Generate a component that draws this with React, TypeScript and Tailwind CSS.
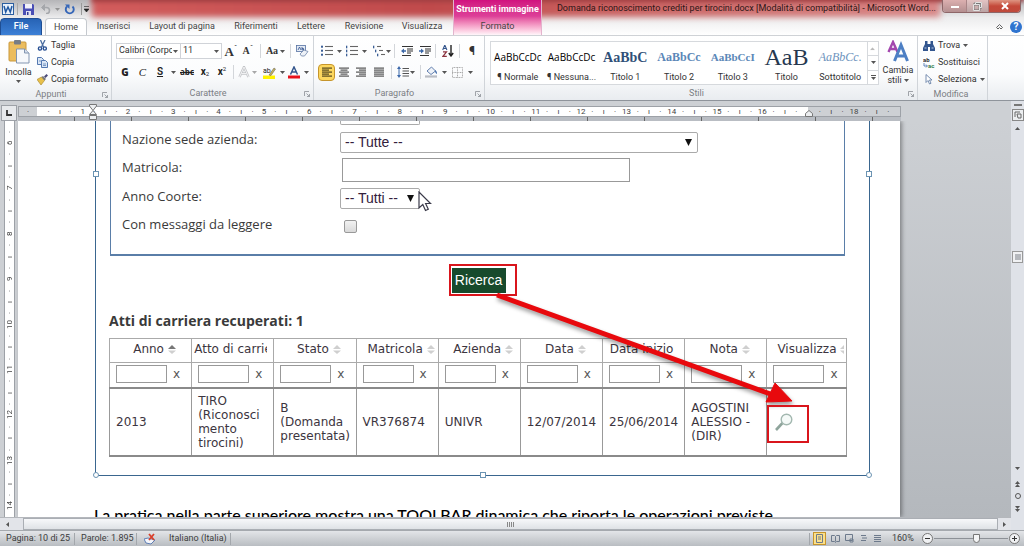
import type { ReactNode } from "react";

const TABS = [
  { label: "Inserisci", cls: "w-[45px]" },
  { label: "Layout di pagina", cls: "w-[88px]" },
  { label: "Riferimenti", cls: "w-[56px]" },
  { label: "Lettere", cls: "w-[50px]" },
  { label: "Revisione", cls: "w-[52px]" },
  { label: "Visualizza", cls: "w-[60px]" },
];

const STYLES = [
  { label: "¶ Normale", sample: "AaBbCcDc", cls: "font-[Open_Sans,sans-serif] text-[10px] text-black" },
  { label: "¶ Nessuna...", sample: "AaBbCcDc", cls: "font-[Open_Sans,sans-serif] text-[10px] text-black" },
  { label: "Titolo 1", sample: "AaBbC", cls: "font-[Liberation_Serif,serif] text-[14px] font-bold text-[#2f5078]" },
  { label: "Titolo 2", sample: "AaBbCc", cls: "font-[Liberation_Serif,serif] text-[12px] font-bold text-[#5b87b8]" },
  { label: "Titolo 3", sample: "AaBbCcI", cls: "font-[Liberation_Serif,serif] text-[11px] font-bold text-[#5b87b8]" },
  { label: "Titolo", sample: "AaB", cls: "font-[Liberation_Serif,serif] text-[24px] text-[#26384f]" },
  { label: "Sottotitolo", sample: "AaBbCc.", cls: "font-[Liberation_Serif,serif] text-[12px] italic text-[#6d93bd]" },
];

const COLUMNS = [
  { label: "Anno", sort: "up", value: "2013" },
  { label: "Atto di carriera", sort: "none", value: "TIRO\n(Riconosci\nmento\ntirocini)" },
  { label: "Stato", sort: "both", value: "B\n(Domanda\npresentata)" },
  { label: "Matricola", sort: "both", value: "VR376874" },
  { label: "Azienda", sort: "both", value: "UNIVR" },
  { label: "Data", sort: "both", value: "12/07/2014" },
  { label: "Data inizio", sort: "none", value: "25/06/2014" },
  { label: "Nota", sort: "both", value: "AGOSTINI\nALESSIO -\n(DIR)" },
  { label: "Visualizza", sort: "both", value: "" },
];

const rulerMark = (i: number, first: number) => {
  const k = i % 4;
  if (k === 3) return String(first + (i - 3) / 4);
  return k === 1 ? "ı" : "·";
};

const Caret = () => (
  <svg className="h-[3px] w-[5px] shrink-0" viewBox="0 0 5 3">
    <path d="M0 0h5L2.5 3z" fill="#555" />
  </svg>
);

const Sep = () => <span className="h-3.5 w-px shrink-0 bg-[#d3d6da]" />;

const Tool = ({ w, label, children }: { w: string; label: string; children: ReactNode }) => (
  <button aria-label={label} className={`flex h-4 shrink-0 items-center justify-center leading-none ${w}`}>
    {children}
  </button>
);

const Lines = ({ rows, color = "#555" }: { rows: number[][]; color?: string }) => (
  <svg className="h-[11px] w-[12px]" viewBox="0 0 12 11">
    {rows.map(([x, w], i) => (
      <rect key={i} x={x} y={i * 2 + 0.5} width={w} height="1.2" fill={color} />
    ))}
  </svg>
);

const ListIcon = ({ kind }: { kind: "bullet" | "number" | "multi" }) => (
  <svg className="h-3 w-3" viewBox="0 0 12 12">
    {[1.5, 5.5, 9.5].map((y, i) => {
      const dx = kind === "multi" ? i * 2 : 0;
      return (
        <g key={y}>
          <rect x={dx} y={y - 0.8} width={kind === "bullet" ? 2 : 1.3} height={kind === "bullet" ? 2 : 2.6} fill="#3b5f96" />
          <path d={`M${dx + 4} ${y}H${kind === "multi" ? dx + 8 : 12}`} stroke="#666" strokeWidth="1.1" />
        </g>
      );
    })}
  </svg>
);

const IndentIcon = ({ out }: { out?: boolean }) => (
  <svg className="h-3 w-[13px]" viewBox="0 0 13 12">
    <path d="M1 1.5h11M6 4h6M6 6h6M6 8h4M1 10.5h9" stroke="#333" strokeWidth="1.2" />
    <path d={out ? "M0 6l3-2.4v1.6h2v1.6H3v1.6z" : "M5 6L2 3.6v1.6H0v1.6h2v1.6z"} fill="#3c68a8" />
  </svg>
);

const Group = ({ label, cls, launcher = true, children }: { label: string; cls: string; launcher?: boolean; children: ReactNode }) => (
  <section className={`flex flex-col border-r border-[#d0d4d9] ${cls}`}>
    <div className="flex flex-1">{children}</div>
    <div className="flex h-[13px] items-center pr-[3px] text-[#7b7e83]">
      <span className="flex-1 text-center">{label}</span>
      {launcher && (
        <svg className="h-[6px] w-[6px]" viewBox="0 0 6 6" fill="none" stroke="#8b8f95">
          <path d="M.5 5V.5H5M2.5 2.5l3 3M5.5 3v2.5H3" strokeWidth=".8" />
        </svg>
      )}
    </div>
  </section>
);

const TitleBar = () => (
  <div className="flex h-[18px] items-center">
    <div className="flex w-[90px] items-center pl-0.5">
      <svg className="h-3 w-3" viewBox="0 0 12 12">
        <rect x=".5" y=".5" width="11" height="11" fill="#e9f1fa" stroke="#2b5ea0" />
        <path d="M2 3l1.700 6L6 4l2.300 5L10 3" fill="none" stroke="#1f57a2" strokeWidth="1.500" />
      </svg>
      <span className="mx-[3px] h-3 w-px bg-[#aaa]" />
      <svg className="ml-[2px] h-[11px] w-[11px]" viewBox="0 0 11 11">
        <path d="M0 0h10l1 1v10H0z" fill="#4a4fb5" />
        <path d="M2 0h7v4.500H2z" fill="#f1f1fa" />
        <path d="M3 7h5v4H3z" fill="#dfe1f3" />
        <path d="M4 8h1.500v3H4z" fill="#333a94" />
      </svg>
      <svg className="ml-[7px] h-[10px] w-[10px]" viewBox="0 0 10 10" fill="none" stroke="#a5a7ab">
        <path d="M2 3.500h3.500a3 3 0 010 6H5" strokeWidth="1.600" />
        <path d="M3.500 .5L.5 3.500l3 3z" fill="#a5a7ab" />
      </svg>
      <span className="ml-1 opacity-50"><Caret /></span>
      <svg className="ml-[4px] h-[11px] w-[11px]" viewBox="0 0 11 11" fill="none">
        <path d="M8.500 2.500a4 4 0 11-5.500 0" stroke="#3566b8" strokeWidth="1.900" />
        <path d="M1 .5h4.500V5z" fill="#3566b8" />
      </svg>
      <span className="mr-[2px] ml-[6px] h-3 w-px bg-[#999]" />
      <svg className="h-[6px] w-[5px] shrink-0" viewBox="0 0 5 6"><path d="M0 .5h5M0 3h5L2.500 6z" fill="#222" stroke="#222" strokeWidth=".6" /></svg>
    </div>
    <h1 className="flex-1 truncate pr-[6px] text-right text-[9px] text-[#2c1516]">
      Domanda riconoscimento crediti per tirocini.docx [Modalità di compatibilità] - Microsoft Word...
    </h1>
    <div className="mr-[3px] flex h-[13px] self-start overflow-hidden rounded-b border border-t-0 border-[#8d6668]">
      <button aria-label="Riduci a icona" className="flex w-6 items-end justify-center border-r border-[#a98587] bg-linear-to-b from-[#dcb0b0] to-[#b48f90] pb-1">
        <span className="h-0.5 w-2 bg-white" />
      </button>
      <button aria-label="Ripristina" className="flex w-[22px] items-center justify-center border-r border-[#a98587] bg-linear-to-b from-[#e3c3c3] to-[#bba3a4]">
        <svg className="h-[9px] w-[9px]" viewBox="0 0 9 9" fill="none"><path d="M2.500 2V.5h6v5H7M.5 2.500h6v6h-6z" stroke="#777" strokeWidth="1.800" /><path d="M2.500 2V.5h6v5H7M.5 2.500h6v6h-6z" stroke="#fff" strokeWidth=".8" /></svg>
      </button>
      <button aria-label="Chiudi" className="flex w-[31px] items-center justify-center bg-linear-to-b from-[#dd9482] via-[#c4493a] to-[#bf4a3c]">
        <svg className="h-2 w-2" viewBox="0 0 8 8"><path d="M1 1l6 6M7 1L1 7" stroke="#fff" strokeWidth="2" /></svg>
      </button>
    </div>
  </div>
);

const Header = () => (
  <header className="relative h-9 shrink-0 overflow-hidden border-b border-[#cfd2d6] bg-linear-to-b from-[#b5b5b8] via-[#ececed] via-50% to-white">
    <div className="absolute -top-1 right-[84px] left-[92px] h-[21px] bg-linear-to-r from-[#d25c5c] via-[#c04a4b] via-40% to-[#d98787] blur-[3px]" />
    <div className="absolute -top-1 right-0 left-[92px] h-[6px] bg-[#a03c3f] blur-[2px]" />
    {/* Contextual tab */}
    <div className="absolute top-0 left-[453px] flex h-9 w-[89px] flex-col items-center border-x border-[#e3b4cd] bg-linear-to-b from-[#d1107f] via-[#dd3f98] via-45% to-white">
      <span className="flex h-[18px] items-center pt-0.5 font-bold whitespace-nowrap text-white">Strumenti immagine</span>
      <button className="flex h-[18px] items-center text-[#444]">Formato</button>
    </div>
    <div className="relative">
      <TitleBar />
      <nav className="flex h-[18px] items-center text-[#454545]">
        <button className="h-[18px] w-[42px] rounded-t-sm border border-[#1e4e94] bg-linear-to-b from-[#2763b5] to-[#3c80d6] font-semibold text-white">File</button>
        <button className="mr-1 ml-[3px] h-[18px] w-[42px] rounded-t-sm border border-b-0 border-[#c5c9ce] bg-white">Home</button>
        {TABS.map(({ label, cls }) => (
          <button key={label} className={`mr-[2px] text-center whitespace-nowrap ${cls}`}>{label}</button>
        ))}
        <span className="flex-1" />
        <button aria-label="Riduci barra multifunzione" className="mr-[7px]">
          <svg className="h-[6px] w-[7px]" viewBox="0 0 7 6" fill="none" stroke="#555"><path d="M.5 3.500l3-3 3 3-1.500 1.500L3.500 3.500 2 5z" strokeWidth=".9" /></svg>
        </button>
        <button aria-label="Guida" className="mr-[2px] h-3 w-3 rounded-full bg-[#2f74cf] text-[10px] leading-3 font-bold text-white">?</button>
      </nav>
    </div>
  </header>
);

const Clipboard = () => (
  <Group label="Appunti" cls="w-[112px]">
    <button className="flex w-[36px] shrink-0 flex-col items-center pt-1 pl-px">
      <svg className="h-6 w-[22px]" viewBox="0 0 22 24">
        <rect x="1" y="2" width="17" height="19" rx="1" fill="#ecbd5e" stroke="#c9983b" />
        <rect x="6" y="0" width="7" height="4.500" rx="1" fill="#777d86" />
        <path d="M8.500 9h8l4.500 4v10H8.500z" fill="#f6f8fb" stroke="#8295b0" />
        <path d="M16.500 9v4H21" fill="#d4deec" stroke="#8295b0" />
      </svg>
      <span className="mt-[2px] leading-3">Incolla</span>
      <span className="mt-[2px]"><Caret /></span>
    </button>
    <div className="flex flex-col pt-[1px] pl-px">
      <button className="flex h-[17px] items-center gap-[3px] whitespace-nowrap">
        <svg className="h-[11px] w-[11px]" viewBox="0 0 11 11" fill="none">
          <path d="M3.500 0l3 7M8 0L4.500 7" stroke="#4c6ea0" strokeWidth="1.300" />
          <circle cx="3" cy="8.500" r="1.600" stroke="#274f93" strokeWidth="1.400" />
          <circle cx="7.800" cy="8.500" r="1.600" stroke="#274f93" strokeWidth="1.400" />
        </svg>
        Taglia
      </button>
      <button className="flex h-[17px] items-center gap-[3px] whitespace-nowrap">
        <svg className="h-[11px] w-[11px]" viewBox="0 0 11 11">
          <path d="M.5.5h4l2 2v5h-6z" fill="#dbe7f6" stroke="#5478b0" />
          <path d="M4.500 3.500h4l2 2v5h-6z" fill="#dbe7f6" stroke="#5478b0" />
          <path d="M6 7h3M6 8.500h3M2 4h2" stroke="#5478b0" strokeWidth=".7" />
        </svg>
        Copia
      </button>
      <button className="flex h-[17px] items-center gap-[3px] whitespace-nowrap">
        <svg className="h-[11px] w-[11px]" viewBox="0 0 11 11">
          <path d="M0 5.500L4.500 3l3 3.500L4 11z" fill="#e8c04a" stroke="#a58327" strokeWidth=".6" />
          <path d="M4.500 3l1.500-1 3 3-1.500 1.500z" fill="#777" />
          <path d="M7 2.500L9.500 0 11 1.500 8.500 4z" fill="#4a4a78" />
        </svg>
        Copia formato
      </button>
    </div>
  </Group>
);

const FontGroup = () => (
  <Group label="Carattere" cls="w-[202px]">
    <div className="flex flex-col gap-[5px] pt-[7px] pl-1">
      <div className="flex h-4 items-center">
        <div className="relative flex items-center">
          <select aria-label="Tipo di carattere" className="h-4 w-[65px] appearance-none overflow-hidden border border-[#d0d3d8] bg-white pr-[8px] pl-[2px] text-[9px]">
            <option>Calibri (Corpc</option>
          </select>
          <span className="pointer-events-none absolute right-[3px]"><Caret /></span>
        </div>
        <div className="relative flex items-center">
          <select aria-label="Dimensione carattere" className="h-4 w-[41px] appearance-none border border-l-0 border-[#d0d3d8] bg-white pl-[2px] text-[9px]">
            <option>11</option>
          </select>
          <span className="pointer-events-none absolute right-[3px]"><Caret /></span>
        </div>
        <Tool w="w-[18px]" label="Aumenta dimensione">
          <span className="font-[Liberation_Serif,serif] text-[13px] font-bold">A</span><span className="mb-1 text-[8px]">ˆ</span>
        </Tool>
        <Tool w="w-[16px]" label="Riduci dimensione">
          <span className="font-[Liberation_Serif,serif] text-[10px] font-bold">A</span><span className="mb-1 text-[8px]">ˇ</span>
        </Tool>
        <span className="w-1" />
        <Sep />
        <Tool w="w-[29px]" label="Maiuscole/minuscole">
          <span className="mr-0.5 font-[Liberation_Serif,serif] text-[10px] font-bold">Aa</span><Caret />
        </Tool>
        <Sep />
        <Tool w="w-[22px]" label="Cancella formattazione">
          <svg className="h-3 w-[13px]" viewBox="0 0 13 12">
            <rect x=".5" y=".5" width="9" height="6" fill="#e4ebf5" stroke="#5572a2" strokeWidth=".8" />
            <path d="M2 5l1.500-3L5 5M6 2v3h1.500V3.500H6" fill="none" stroke="#2f4f8c" strokeWidth=".8" />
            <path d="M4 9l4-4 4 1.500-3.500 4.500H5.500z" fill="#edf1f7" stroke="#7085aa" strokeWidth=".8" />
          </svg>
        </Tool>
      </div>
      <div className="flex h-4 items-center text-[#222]">
        <Tool w="w-[18px]" label="Grassetto"><b className="font-[Open_Sans,sans-serif] text-[10px] font-extrabold">G</b></Tool>
        <Tool w="w-[17px]" label="Corsivo"><i className="font-[Liberation_Serif,serif] text-[11px]">C</i></Tool>
        <Tool w="w-[18px]" label="Sottolineato"><span className="text-[10px] font-semibold underline">S</span></Tool>
        <Tool w="w-[8px]" label="Stile sottolineatura"><Caret /></Tool>
        <Tool w="w-[20px]" label="Barrato"><span className="font-[Open_Sans,sans-serif] text-[8px] font-bold line-through">abc</span></Tool>
        <Tool w="w-[16px]" label="Pedice"><b className="text-[10px]">x</b><sub className="text-[6px]">2</sub></Tool>
        <Tool w="w-[18px]" label="Apice"><b className="text-[10px]">x</b><sup className="text-[6px]">2</sup></Tool>
        <span className="w-[2px]" />
        <Sep />
        <Tool w="w-[27px]" label="Effetti testo">
          <svg className="mr-[2px] h-3 w-3" viewBox="0 0 12 12"><path d="M1.500 11L6 1l4.500 10M3.500 7.500h5" fill="none" stroke="#c3c5c8" strokeWidth="2.400" /><path d="M1.500 11L6 1l4.500 10M3.500 7.500h5" fill="none" stroke="#f5f5f6" strokeWidth=".9" /></svg>
          <span className="opacity-50"><Caret /></span>
        </Tool>
        <Tool w="w-[25px]" label="Colore evidenziatore">
          <svg className="mr-1 h-[13px] w-[13px]" viewBox="0 0 13 13">
            <rect y="9.500" width="12" height="3.500" fill="#fff200" />
            <text x="0" y="7" fontSize="7" fill="#222">ab</text>
            <path d="M6 9l5-7 1.500 1L8 9.500z" fill="#c9b45c" stroke="#555" strokeWidth=".5" />
          </svg>
          <Caret />
        </Tool>
        <Tool w="w-[24px]" label="Colore carattere">
          <svg className="mr-1 h-[13px] w-3" viewBox="0 0 12 13">
            <rect y="9.500" width="12" height="3" fill="#e8121b" />
            <path d="M2.500 8.500L6 1l3.500 7.500M4 6h4" fill="none" stroke="#34558c" strokeWidth="1.500" />
          </svg>
          <Caret />
        </Tool>
      </div>
    </div>
  </Group>
);

const ParagraphGroup = () => (
  <Group label="Paragrafo" cls="w-[171px]">
    <div className="flex flex-col gap-[5px] pt-[7px] pl-1">
      <div className="flex h-4 items-center">
        <Tool w="w-[26px]" label="Elenco puntato"><ListIcon kind="bullet" /><span className="w-1" /><Caret /></Tool>
        <Tool w="w-[25px]" label="Elenco numerato"><ListIcon kind="number" /><span className="w-1" /><Caret /></Tool>
        <Tool w="w-[25px]" label="Elenco a più livelli"><ListIcon kind="multi" /><span className="w-px" /><Caret /></Tool>
        <Sep />
        <span className="w-1" />
        <Tool w="w-[17px]" label="Riduci rientro"><IndentIcon out /></Tool>
        <Tool w="w-[18px]" label="Aumenta rientro"><IndentIcon /></Tool>
        <span className="w-px" />
        <Sep />
        <Tool w="w-[23px]" label="Ordina">
          <svg className="h-3 w-3" viewBox="0 0 12 12" fill="none">
            <path d="M.7 5L2.800 0l2.100 5M1.500 3.500h2.600" stroke="#34558c" strokeWidth="1.100" />
            <path d="M1 6.800h3.500L1 11.300h3.800" stroke="#8c3440" strokeWidth="1.200" />
            <path d="M9 0v11M6.800 8L9 11l2.200-3" stroke="#222" strokeWidth="1.400" />
          </svg>
        </Tool>
        <Sep />
        <Tool w="w-[24px]" label="Mostra tutto"><span className="text-[12px] font-bold text-[#333]">¶</span></Tool>
      </div>
      <div className="flex h-4 items-center">
        <button aria-label="Allinea a sinistra" className="flex h-[17px] w-[17px] items-center justify-center rounded-sm border border-[#c6952c] bg-[#fcd75f]">
          <Lines rows={[[1, 10], [1, 7], [1, 10], [1, 7], [1, 10]]} color="#54481f" />
        </button>
        <Tool w="w-[17px]" label="Centra"><Lines rows={[[1, 10], [2.5, 7], [1, 10], [2.5, 7], [1, 10]]} /></Tool>
        <Tool w="w-[18px]" label="Allinea a destra"><Lines rows={[[1, 10], [4, 7], [1, 10], [4, 7], [1, 10]]} /></Tool>
        <Tool w="w-[18px]" label="Giustifica"><Lines rows={[[1, 10], [1, 10], [1, 10], [1, 10], [1, 10]]} /></Tool>
        <span className="w-[3px]" />
        <Sep />
        <Tool w="w-[28px]" label="Interlinea">
          <svg className="mr-px h-3 w-3" viewBox="0 0 12 12">
            <path d="M2 0l2 3H0zM2 12l2-3H0z" fill="#3b68aa" /><path d="M2 3v6" stroke="#3b68aa" />
            <path d="M5.500 2.500H12M5.500 5H12M5.500 7.500H12M5.500 10H12" stroke="#555" />
          </svg>
          <Caret />
        </Tool>
        <Sep />
        <Tool w="w-[29px]" label="Sfondo">
          <svg className="mr-1 h-3 w-[13px]" viewBox="0 0 13 12">
            <path d="M2 5l4.500-4 4 4L6 8.500z" fill="#eef2f8" stroke="#627fae" />
            <path d="M10 4q2.500 1.500 2 4-2-.5-2-4z" fill="#3c68a8" />
            <path d="M0 10.500h12" stroke="#b9bdc4" strokeWidth="2.200" />
          </svg>
          <Caret />
        </Tool>
        <Tool w="w-[24px]" label="Bordi">
          <svg className="mr-[5px] h-[11px] w-[11px]" viewBox="0 0 11 11" fill="none"><path d="M.5.5h10v10H.5zM5.500 0v11M0 5.500h11" stroke="#aaa" strokeDasharray="1 .6" /></svg>
          <Caret />
        </Tool>
      </div>
    </div>
  </Group>
);

const StylesGroup = () => (
  <Group label="Stili" cls="min-w-0 flex-1">
    <div className="mt-[5px] mb-[2px] ml-[5px] flex min-w-0 flex-1 border border-[#d6d9dd] bg-white">
      {STYLES.map(({ label, sample, cls }) => (
        <button key={label} className="flex min-w-0 flex-1 flex-col items-center">
          <span className={`flex h-[30px] w-[50px] items-center justify-center whitespace-nowrap ${cls}`}>{sample}</span>
          <span className="leading-[10px] whitespace-nowrap">{label}</span>
        </button>
      ))}
      <div className="flex w-[11px] shrink-0 flex-col border-l border-[#d6d9dd]">
        <button aria-label="Su" className="flex flex-1 rotate-180 items-center justify-center opacity-40"><Caret /></button>
        <button aria-label="Giù" className="flex flex-1 items-center justify-center border-y border-[#d6d9dd]"><Caret /></button>
        <button aria-label="Altro" className="flex flex-1 flex-col items-center justify-center gap-px"><span className="h-px w-[5px] bg-[#555]" /><Caret /></button>
      </div>
    </div>
    <button className="flex w-[38px] shrink-0 flex-col items-center pt-1">
      <svg className="h-[23px] w-[22px]" viewBox="0 0 22 23" fill="none">
        <path d="M1.500 12L6 2l4.500 10M3 9h6" stroke="#a346ae" strokeWidth="2.400" />
        <path d="M7.500 21L14 5l6.500 16M10 16h8" stroke="#4d7fc4" strokeWidth="3" />
      </svg>
      <span className="mt-[2px] leading-[10px]">Cambia</span>
      <span className="flex items-center gap-[2px] leading-[10px]">stili <Caret /></span>
    </button>
  </Group>
);

const EditGroup = () => (
  <Group label="Modifica" cls="w-[70px]" launcher={false}>
    <div className="flex flex-col pt-[1px] pl-[5px]">
      <button className="flex h-[17px] items-center gap-[3px]">
        <svg className="h-[10px] w-[12px]" viewBox="0 0 12 10" fill="#33568f">
          <path d="M2 0h2.500v3h3V0H10v3l2 4v3H7V6H5v4H0V7l2-4z" />
          <path d="M1.500 7h2M8.500 7h2" stroke="#b8cae6" />
        </svg>
        Trova <Caret />
      </button>
      <button className="flex h-[17px] items-center gap-[3px]">
        <svg className="h-3 w-3" viewBox="0 0 12 12">
          <text x="0" y="5" fontSize="6" fontWeight="700" fill="#333">ab</text>
          <text x="5" y="11" fontSize="6" fontWeight="700" fill="#2e7d4f">ac</text>
          <path d="M1 6v3h3M3 7.500L4.500 9 3 10.500" fill="none" stroke="#3c68a8" strokeWidth=".8" />
        </svg>
        Sostituisci
      </button>
      <button className="flex h-[17px] items-center gap-[3px]">
        <svg className="h-[11px] w-[12px]" viewBox="0 0 12 11"><path d="M3 .5v8l2-2 1.500 3.500 1.500-.7L6.500 6H9z" fill="#fff" stroke="#6982a8" strokeWidth=".9" /></svg>
        Seleziona <Caret />
      </button>
    </div>
  </Group>
);

const HorizontalRuler = () => (
  <div className="flex h-[21px] shrink-0 border-t border-[#8f949b] bg-[#cdd0d4]">
    <div className="flex w-[18px] items-end justify-end pr-px">
      <button aria-label="Tabulazione" className="flex h-4 w-4 items-center justify-center border border-[#9da1a7] bg-[#e7e9ec]">
        <svg className="h-[6px] w-[6px]" viewBox="0 0 6 6"><path d="M1 0v5h5" fill="none" stroke="#333" strokeWidth="1.800" /></svg>
      </button>
    </div>
    <div className="relative flex flex-1 flex-col pt-[5px]">
      <div className="flex h-[11px] border border-[#9da1a7] text-[8px] leading-[9px] text-[#444]">
        <div className="w-[18px] bg-[#cdd0d4] text-center">·</div>
        <div className="grid flex-1 auto-cols-fr grid-flow-col bg-white px-[6px]">
          {Array.from({ length: 67 }, (_, i) => (
            <span key={i} className="flex w-0 justify-center justify-self-center whitespace-nowrap">{rulerMark(i, 1)}</span>
          ))}
        </div>
        <div className="grid w-[92px] auto-cols-fr grid-flow-col bg-[#cdd0d4] px-[6px]">
          {Array.from({ length: 7 }, (_, i) => (
            <span key={i} className="flex w-0 justify-center justify-self-center whitespace-nowrap">{rulerMark(i, 18)}</span>
          ))}
        </div>
      </div>
      <div className="h-1 bg-[#b9bdc3] bg-[repeating-linear-gradient(90deg,transparent_0_56px,#666_56px_57px)]" />
      {/* Indent markers */}
      <svg className="absolute top-[3px] left-[71px] h-4 w-2" viewBox="0 0 8 16" fill="#eceef0" stroke="#777">
        <path d="M.5.5h7V2L4 6.500.5 2zM4 6.500l3.500 4h-7zM.5 11.500h7v4h-7z" />
      </svg>
      <svg className="absolute top-[9px] right-[88px] h-[7px] w-2" viewBox="0 0 8 7" fill="#eceef0" stroke="#777">
        <path d="M4 .5l3.500 3v3h-7v-3z" />
      </svg>
    </div>
    <div className="w-[110px]" />
  </div>
);

const VerticalRuler = () => (
  <div className="flex w-[18px] shrink-0 bg-[#cdd0d4] pr-[3px] pl-1">
    <div className="grid flex-1 auto-rows-fr border-x border-[#9da1a7] bg-white pt-[5px] pb-[5px] text-[8px] leading-[9px] text-[#444]">
      {Array.from({ length: 34 }, (_, i) => (
        <span key={i} className="flex h-0 rotate-180 items-center justify-center self-center justify-self-center whitespace-nowrap [writing-mode:vertical-rl]">
          {rulerMark(i + 2, 6)}
        </span>
      ))}
    </div>
  </div>
);

const SortIcon = ({ sort }: { sort: string }) =>
  sort === "none" ? null : (
    <svg className="ml-1 inline h-[9px] w-2" viewBox="0 0 8 9">
      <path d="M0 4l4-4 4 4z" fill={sort === "up" ? "#777" : "#cfcfcf"} />
      <path d="M0 5.500h8L4 9z" fill="#cfcfcf" />
    </svg>
  );

const ResultsTable = () => (
  <table className="mr-[22px] ml-[13px] w-[calc(100%-35px)] table-fixed border-collapse border border-[#999] font-[DejaVu_Sans,sans-serif] text-[12px] leading-[14px] text-[#3c3540]">
    <colgroup>
      <col span={8} className="w-[11.15%]" />
      <col />
    </colgroup>
    <thead>
      <tr className="h-6">
        {COLUMNS.map(({ label, sort }) => (
          <th key={label} className="border border-[#aaa] px-[2px] pb-[3px] font-normal">
            <div className={`overflow-hidden text-center whitespace-nowrap ${sort === "none" ? "mr-1" : "pl-2"}`}>
              {label}
              <SortIcon sort={sort} />
            </div>
          </th>
        ))}
      </tr>
      <tr className="h-[25px] border-b-2 border-[#8a8a8a]">
        {COLUMNS.map(({ label }) => (
          <td key={label} className="border-x border-[#aaa] p-0 pb-[2px] pl-[6px]">
            <div className="flex items-center">
              <input aria-label={`Filtra ${label}`} className="h-[18px] w-[51px] min-w-0 border border-[#999] bg-white" />
              <button aria-label="Cancella filtro" className="ml-[6px] text-[#555]">x</button>
            </div>
          </td>
        ))}
      </tr>
    </thead>
    <tbody>
      <tr className="h-[68px] border-b-2 border-[#8a8a8a]">
        {COLUMNS.map(({ label, value }) => (
          <td key={label} className="border-x border-[#999] p-0 pl-[6px] align-middle whitespace-pre">
            {value || (
              <button aria-label="Visualizza pratica" className="ml-[2px] block">
                <svg className="h-[18px] w-[18px]" viewBox="0 0 18 18" fill="none">
                  <path d="M1 17l6.500-7" stroke="#8fa59c" strokeWidth="2.600" />
                  <circle cx="11.500" cy="6.500" r="5.300" fill="#f5faf8" stroke="#a3b8b0" strokeWidth="1.400" />
                </svg>
              </button>
            )}
          </td>
        ))}
      </tr>
    </tbody>
  </table>
);

const FormSelect = ({ id, value, cls }: { id: string; value: string; cls: string }) => (
  <div className={`relative flex items-center ${cls}`}>
    <select id={id} className="h-[21px] w-full appearance-none rounded-xs border border-[#aaa] bg-white pl-[4px] font-[Liberation_Sans,sans-serif] text-[14px] leading-[18px] text-[#33203c]">
      <option>{value}</option>
    </select>
    <svg className="pointer-events-none absolute right-[6px] h-[7px] w-[7px]" viewBox="0 0 7 7"><path d="M0 0h7L3.500 7z" fill="#111" /></svg>
  </div>
);

const Handle = ({ cls }: { cls: string }) => <span className={`absolute h-[6px] w-[6px] border border-[#6c94b3] bg-white ${cls}`} />;

// Screenshot pasted in the document, with its selection frame
const SelectedPicture = () => (
  <div className="relative mr-[30px] ml-[77px] border-x border-b border-[#3a668f] pb-[18px]">
    <div className="mr-6 ml-[14px] border-x border-b-2 border-[#5a7ea8] pb-[14px] pl-[11px] font-[Open_Sans,sans-serif] text-[13px] text-[#3a3a3a]">
      <div className="ml-[218px] h-1 w-[80px] rounded-b-xs border border-t-0 border-[#aaa]" />
      <div className="grid grid-cols-[218px_1fr] pt-[3px]">
        <label htmlFor="nazione" className="h-7 pt-px leading-5">Nazione sede azienda:</label>
        <FormSelect id="nazione" value="-- Tutte --" cls="w-[358px]" />
        <label htmlFor="matricola" className="h-7 pt-px leading-5">Matricola:</label>
        <div className="flex items-center pl-[2px]">
          <input id="matricola" className="h-6 w-[288px] border border-[#999] bg-white px-1" />
        </div>
        <label htmlFor="coorte" className="h-7 pt-[2px] leading-5">Anno Coorte:</label>
        <FormSelect id="coorte" value="-- Tutti --" cls="w-[80px]" />
        <label htmlFor="messaggi" className="h-7 pt-[2px] leading-5">Con messaggi da leggere</label>
        <div className="flex items-center pl-1">
          <input id="messaggi" type="checkbox" className="h-[13px] w-[13px] appearance-none rounded-xs border border-[#999] bg-linear-to-b from-[#f2f2f2] to-[#d9d9d9]" />
        </div>
      </div>
    </div>
    <div className="mx-auto mt-[8px] flex h-[32px] w-[68px] border-2 border-[#d9151c] pt-[2px] pl-px">
      <button className="h-[25px] w-[54px] bg-[#174a2c] font-[Liberation_Sans,sans-serif] text-[14px] text-white">Ricerca</button>
    </div>
    <h2 className="mt-[15px] mb-[7px] ml-[13px] font-[Open_Sans,sans-serif] text-[14px] leading-5 font-bold text-[#3a3a3a]">Atti di carriera recuperati: 1</h2>
    <ResultsTable />

    {/* Annotations drawn over the picture */}
    <svg className="pointer-events-none absolute top-[170px] left-[400px] h-[160px] w-[330px] drop-shadow-[1px_3px_2px_rgba(0,0,0,0.4)]" viewBox="0 0 330 160">
      <path d="M1 4L280 105" stroke="#e8090d" strokeWidth="5" />
      <path d="M279 92L296 110L270 111z" fill="#e8090d" stroke="#e8090d" />
    </svg>
    <span className="absolute top-[284px] left-[671px] h-[38px] w-[42px] border-2 border-[#d9151c]" />
    <svg className="absolute top-[70px] left-[322px] h-[21px] w-[14px]" viewBox="0 0 14 21">
      <path d="M1 1v16l3.800-3.500 2.700 6 2.800-1.200-2.700-5.800H12.500z" fill="#fff" stroke="#3b3b4a" strokeWidth="1.200" />
    </svg>

    <Handle cls="top-[50px] -left-[3px]" />
    <Handle cls="top-[50px] -right-[3px]" />
    <Handle cls="-bottom-[3px] left-1/2 -translate-x-1/2" />
    <Handle cls="-bottom-[3px] -left-[3px] rounded-full" />
    <Handle cls="-right-[3px] -bottom-[3px] rounded-full" />
  </div>
);

const VerticalScrollbar = () => (
  <div className="flex w-[13px] shrink-0 flex-col items-center border-t border-[#8f949b] bg-[#dfe2e8]">
    <span className="mt-[3px] h-0.5 w-2 bg-[#777]" />
    <button aria-label="Righello" className="mt-[3px] h-3 w-3 border border-[#888] bg-[#eceef0]">
      <svg className="h-[10px] w-[10px]" viewBox="0 0 10 10" fill="none" stroke="#666"><path d="M2 7V2h5M4 4h4v4H5z" /></svg>
    </button>
    <span className="mt-[6px] rotate-180"><Caret /></span>
    <div className="flex h-[31%] w-full items-end justify-center">
      <span className="flex h-3 w-[11px] items-center justify-center border border-[#999] bg-[#f0f1f3]"><span className="h-[6px] w-[6px] bg-[#b5b8bd]" /></span>
    </div>
    <span className="flex-1" />
    <Caret />
    <button aria-label="Pagina precedente" className="mt-[11px] flex rotate-180 flex-col"><Caret /><Caret /></button>
    <button aria-label="Seleziona oggetto" className="mt-[6px] h-[6px] w-[6px] rounded-full border border-[#555]" />
    <button aria-label="Pagina successiva" className="mt-[7px] mb-[18px] flex flex-col"><Caret /><Caret /></button>
  </div>
);

const HorizontalScrollbar = () => (
  <div className="flex h-[13px] shrink-0 items-center border-t border-[#b4b7bc] bg-[#e2e4e9]">
    <button aria-label="Scorri a sinistra" className="flex w-[23px] rotate-90 justify-center pt-2"><Caret /></button>
    <div className="flex h-3 flex-1 items-center justify-center border border-[#aaaeb4] bg-linear-to-b from-[#f7f8fa] to-[#dfe2e6]">
      <span className="h-[5px] w-[7px] bg-[repeating-linear-gradient(90deg,#888_0_1px,transparent_1px_2px)]" />
    </div>
    <button aria-label="Scorri a destra" className="flex w-[13px] -rotate-90 justify-center"><Caret /></button>
  </div>
);

const ViewIcon = ({ d }: { d: string }) => (
  <svg className="h-[9px] w-[9px]" viewBox="0 0 9 9" fill="none" stroke="#6d7a8c"><path d={d} /></svg>
);

const StatusBar = () => (
  <footer className="flex h-4 shrink-0 items-center border-t border-[#a5a9ae] bg-linear-to-b from-[#e3e5e8] to-[#b9bdc2] text-[#3d3d3d]">
    <span className="w-[68px] pl-[6px] whitespace-nowrap">Pagina: 10 di 25</span>
    <span className="mr-[6px] ml-[6px] h-3 w-px bg-[#a3a7ac]" />
    <span className="w-[50px] whitespace-nowrap">Parole: 1.895</span>
    <span className="mx-[5px] h-3 w-px bg-[#a3a7ac]" />
    <svg className="ml-[2px] h-3 w-3" viewBox="0 0 12 12" fill="none">
      <path d="M0 6l4-1 7 2-4 4-5-1z" fill="#f3f6fb" stroke="#5f7fb5" />
      <path d="M5 1l5 6M10 1L5 7" stroke="#d8402c" strokeWidth="1.800" />
    </svg>
    <span className="ml-[13px] w-[55px] whitespace-nowrap">Italiano (Italia)</span>
    <span className="ml-[6px] h-3 w-px bg-[#a3a7ac]" />
    <span className="flex-1" />
    <span className="mr-[3px] h-3 w-px bg-[#a3a7ac]" />
    <div className="flex items-center gap-[5px]">
      <button aria-label="Layout di stampa" className="flex h-[13px] w-[13px] items-center justify-center border border-[#c6952c] bg-[#fbe08a]">
        <ViewIcon d="M1.500.5h6v8h-6zM3 3h3M3 5h3" />
      </button>
      <button aria-label="Lettura a schermo intero"><ViewIcon d="M.5 1.500h3l1 1 1-1h3v6h-3l-1 1-1-1h-3zM4.500 2.500v5" /></button>
      <button aria-label="Layout Web"><ViewIcon d="M.5.5h7v6h-7zM5 5h3v3H5z" /></button>
      <button aria-label="Struttura"><ViewIcon d="M2 1.500h5M3 4h5M2 6.500h5" /></button>
      <button aria-label="Bozza"><ViewIcon d="M1 1.500h7M1 3.500h7M1 5.500h7M1 7.500h7" /></button>
    </div>
    <span className="mr-[10px] ml-[10px] w-[20px]">160%</span>
    <button aria-label="Zoom indietro" className="flex h-[11px] w-[11px] items-center justify-center rounded-full border border-[#777] bg-[#f0f1f3]">
      <span className="h-px w-[5px] bg-[#333]" />
    </button>
    <input
      type="range"
      aria-label="Zoom"
      min={0}
      max={100}
      defaultValue={58}
      className="mx-px h-3 w-[74px] appearance-none bg-[linear-gradient(#8d9197,#8d9197)] bg-[length:100%_1px] bg-center bg-no-repeat [&::-webkit-slider-thumb]:h-[9px] [&::-webkit-slider-thumb]:w-[7px] [&::-webkit-slider-thumb]:appearance-none [&::-webkit-slider-thumb]:rounded-b-full [&::-webkit-slider-thumb]:border [&::-webkit-slider-thumb]:border-[#777] [&::-webkit-slider-thumb]:bg-[#f4f5f6]"
    />
    <button aria-label="Zoom avanti" className="mr-1 flex h-[11px] w-[11px] items-center justify-center rounded-full border border-[#777] bg-[#f0f1f3]">
      <svg className="h-[5px] w-[5px]" viewBox="0 0 5 5"><path d="M2.500 0v5M0 2.500h5" stroke="#333" /></svg>
    </button>
  </footer>
);

const App = () => (
  <div className="flex h-screen flex-col overflow-hidden bg-[#cdd0d4] font-[Roboto,sans-serif] text-[9px] text-[#333]">
    <Header />
    <div className="flex h-16 shrink-0 bg-linear-to-b from-white via-[#fbfcfd] via-60% to-[#e9ecf0] pr-[36px]">
      <Clipboard />
      <FontGroup />
      <ParagraphGroup />
      <StylesGroup />
      <EditGroup />
    </div>
    <div className="flex min-h-0 flex-1">
      <div className="flex min-w-0 flex-1 flex-col">
        <HorizontalRuler />
        <div className="flex min-h-0 flex-1 overflow-hidden bg-linear-to-b from-[#cdd0d4] to-[#b4b8bd]">
          <VerticalRuler />
          <main className="min-w-0 flex-1 bg-white shadow-[2px_0_4px_rgba(0,0,0,0.35)]">
            <SelectedPicture />
            <p className="mt-[25px] ml-[76px] font-[Lato,sans-serif] text-[16px] leading-7 font-medium whitespace-nowrap text-black">
              La pratica nella parte superiore mostra una TOOLBAR dinamica che riporta le operazioni previste
            </p>
          </main>
          <div className="w-[111px] shrink-0" />
        </div>
        <HorizontalScrollbar />
      </div>
      <VerticalScrollbar />
    </div>
    <StatusBar />
  </div>
);

export default App;
